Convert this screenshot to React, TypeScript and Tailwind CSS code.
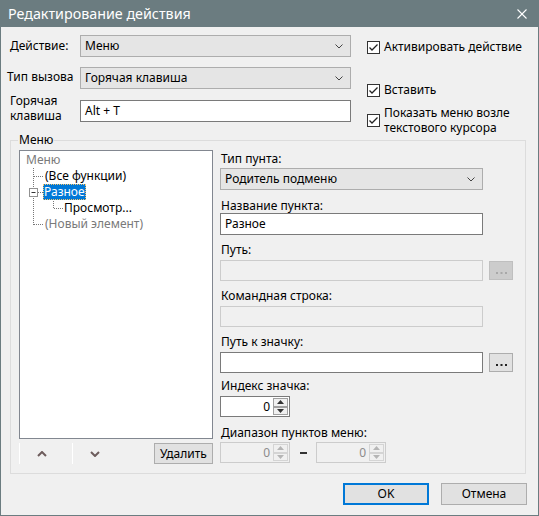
import React from "react";

const Chevron = () => (
  <svg width="8" height="5" viewBox="0 0 8 5" className="shrink-0">
    <polyline points="0.5,0.5 4,4 7.5,0.5" fill="none" stroke="#444" strokeWidth="1" />
  </svg>
);

const Combo = ({ text, w }: { text: string; w: string }) => (
  <div className={`${w} h-[22px] border border-[#adadad] bg-[#e5e5e5] flex items-center justify-between pl-[4px] pr-[7px]`}>
    <span>{text}</span>
    <Chevron />
  </div>
);

const Check = () => (
  <div className="w-[13px] h-[13px] border border-[#333] bg-white shrink-0 flex items-center justify-center">
    <svg width="11" height="11" viewBox="0 0 11 11">
      <polyline points="1.5,5.5 4,8 9.5,2.5" fill="none" stroke="#222" strokeWidth="1.3" />
    </svg>
  </div>
);

const SpinArrows = ({ disabled }: { disabled?: boolean }) => {
  const c = disabled ? "#b5b5b5" : "#333";
  const b = disabled ? "border-[#d4d4d4]" : "border-[#a0a0a0]";
  return (
    <div className="flex flex-col h-full w-[16px] shrink-0 py-[1px] pr-[1px]">
      <div className={`flex-1 border ${b} bg-[#f0f0f0] flex items-center justify-center`}>
        <svg width="7" height="4" viewBox="0 0 7 4"><polygon points="0,4 3.5,0 7,4" fill={c} /></svg>
      </div>
      <div className={`flex-1 border ${b} bg-[#f0f0f0] flex items-center justify-center`}>
        <svg width="7" height="4" viewBox="0 0 7 4"><polygon points="0,0 3.5,4 7,0" fill={c} /></svg>
      </div>
    </div>
  );
};

const Spin = ({ disabled }: { disabled?: boolean }) => (
  <div
    className={`w-[70px] h-[21px] border flex items-center ${
      disabled ? "border-[#cccccc] bg-[#f0f0f0] text-[#8c8c8c]" : "border-[#7a7a7a] bg-white"
    }`}
  >
    <div className="flex-1 text-right pr-[3px]">0</div>
    <SpinArrows disabled={disabled} />
  </div>
);

const DotsBtn = ({ disabled }: { disabled?: boolean }) => (
  <div
    className={`ml-[6px] w-[24px] h-[19px] border flex items-end justify-center pb-[5px] ${
      disabled ? "border-[#bfbfbf] bg-[#cccccc]" : "border-[#adadad] bg-[#e1e1e1]"
    }`}
  >
    <svg width="11" height="2" viewBox="0 0 11 2">
      {[0, 4.5, 9].map((x) => (
        <rect key={x} x={x} y="0" width="2" height="2" fill={disabled ? "#a8a8a8" : "#222"} />
      ))}
    </svg>
  </div>
);

const Label = ({ children, mt }: { children: React.ReactNode; mt: string }) => (
  <div className={`${mt} h-[15px] leading-[15px] pl-[1px]`}>{children}</div>
);

export default function App() {
  return (
    <div className="w-[539px] h-[516px] bg-[#f0f0f0] border-x border-b border-[#6b7c80] flex flex-col text-[12px] text-black font-['Noto_Sans',sans-serif] overflow-hidden">
      {/* Title bar */}
      <div className="h-[27px] bg-[#6b7c80] flex items-center justify-between pl-[7px] pr-[11px] text-white shrink-0">
        <span className="text-[14.3px]">Редактирование действия</span>
        <svg width="10" height="10" viewBox="0 0 10 10">
          <line x1="0.5" y1="0.5" x2="9.5" y2="9.5" stroke="white" strokeWidth="1.1" />
          <line x1="9.5" y1="0.5" x2="0.5" y2="9.5" stroke="white" strokeWidth="1.1" />
        </svg>
      </div>

      {/* Top section */}
      <div className="h-[113px] shrink-0 flex pt-[8px] pl-[9px]">
        <div className="flex flex-col gap-[10px]">
          <div className="flex items-center">
            <div className="w-[70px]">Действие:</div>
            <Combo text="Меню" w="w-[271px]" />
          </div>
          <div className="flex items-center">
            <div className="w-[70px] ml-[-3px] mr-[3px] mt-[-3px]">Тип вызова</div>
            <Combo text="Горячая клавиша" w="w-[271px]" />
          </div>
          <div className="flex items-center">
            <div className="w-[70px] mt-[-6px] flex flex-col">
              <span className="leading-[15px]">Горячая</span>
              <span className="leading-[15px]">клавиша</span>
            </div>
            <div className="w-[271px] h-[22px] border border-[#7a7a7a] bg-white flex items-center pl-[4px]">Alt + T</div>
          </div>
        </div>
        <div className="ml-[16px] flex flex-col">
          <div className="mt-[5px] h-[14px] flex items-center gap-[4px]">
            <Check />
            <span className="leading-[14px]">Активировать действие</span>
          </div>
          <div className="mt-[29px] h-[14px] flex items-center gap-[4px]">
            <Check />
            <span className="leading-[14px]">Вставить</span>
          </div>
          <div className="mt-[8px] flex items-center gap-[4px]">
            <Check />
            <div className="flex flex-col">
              <span className="leading-[15px]">Показать меню возле</span>
              <span className="leading-[15px]">текстового курсора</span>
            </div>
          </div>
        </div>
      </div>

      {/* Group box */}
      <div className="relative ml-[9px] w-[516px] h-[334px] shrink-0 border border-[#dcdcdc] flex pl-[8px] pt-[9px]">
        <span className="absolute top-[-9px] left-[7px] bg-[#f0f0f0] px-[1px] leading-[16px]">Меню</span>

        {/* Left: tree */}
        <div className="flex flex-col w-[194px]">
          <div className="relative w-[194px] h-[289px] border border-[#828790] bg-white pt-[1px]">
            <svg className="absolute left-0 top-0" width="60" height="90" viewBox="0 0 60 90">
              <line x1="13.5" y1="17" x2="13.5" y2="74" stroke="#777" strokeDasharray="1 1" />
              <line x1="14" y1="25.5" x2="24" y2="25.5" stroke="#777" strokeDasharray="1 1" />
              <line x1="18" y1="41.5" x2="23" y2="41.5" stroke="#777" strokeDasharray="1 1" />
              <line x1="14" y1="73.5" x2="24" y2="73.5" stroke="#777" strokeDasharray="1 1" />
              <line x1="33.5" y1="50" x2="33.5" y2="58" stroke="#777" strokeDasharray="1 1" />
              <line x1="34" y1="57.5" x2="43" y2="57.5" stroke="#777" strokeDasharray="1 1" />
              <rect x="9.5" y="37.5" width="8" height="8" fill="white" stroke="#919191" />
              <line x1="11.5" y1="41.5" x2="15.5" y2="41.5" stroke="#333" />
            </svg>
            <div className="h-[16px] leading-[16px] pl-[6px] text-[#7a7a7a]">Меню</div>
            <div className="h-[16px] leading-[16px] pl-[25px]">(Все функции)</div>
            <div className="h-[16px] leading-[16px] pl-[23px] flex">
              <span className="relative z-10 bg-[#0078d7] text-white px-[1px] outline outline-1 outline-dotted outline-[#f5c56e] -outline-offset-1">Разное</span>
            </div>
            <div className="h-[16px] leading-[16px] pl-[44px]">Просмотр...</div>
            <div className="h-[16px] leading-[16px] pl-[25px] text-[#7a7a7a]">(Новый элемент)</div>
          </div>
          <div className="mt-[4px] h-[21px] flex items-stretch">
            <div className="w-[53px] pr-[8px] border-l border-white flex items-center justify-center">
              <svg width="10" height="6" viewBox="0 0 10 6">
                <polyline points="1,5 5,1 9,5" fill="none" stroke="#6d5c5c" strokeWidth="2" />
              </svg>
            </div>
            <div className="w-[52px] pr-[8px] border-l border-white flex items-center justify-center">
              <svg width="10" height="6" viewBox="0 0 10 6">
                <polyline points="1,1 5,5 9,1" fill="none" stroke="#6d5c5c" strokeWidth="2" />
              </svg>
            </div>
            <div className="flex-1" />
            <div className="w-[59px] border border-[#adadad] bg-[#e1e1e1] flex items-center justify-center">Удалить</div>
          </div>
        </div>

        {/* Right column */}
        <div className="ml-[7px] flex flex-col">
          <Label mt="mt-[1px]">Тип пунта:</Label>
          <div className="mt-[2px]">
            <Combo text="Родитель подменю" w="w-[263px]" />
          </div>
          <Label mt="mt-[8px]">Название пункта:</Label>
          <div className="w-[263px] h-[22px] border border-[#7a7a7a] bg-white flex items-center pl-[4px]">Разное</div>
          <Label mt="mt-[7px]">Путь:</Label>
          <div className="mt-[3px] flex items-center">
            <div className="w-[263px] h-[21px] border border-[#cccccc] bg-[#f0f0f0]" />
            <DotsBtn disabled />
          </div>
          <Label mt="mt-[7px]">Командная строка:</Label>
          <div className="mt-[3px] w-[263px] h-[21px] border border-[#cccccc] bg-[#f0f0f0]" />
          <Label mt="mt-[7px]">Путь к значку:</Label>
          <div className="mt-[3px] flex items-center">
            <div className="w-[263px] h-[21px] border border-[#7a7a7a] bg-white" />
            <DotsBtn />
          </div>
          <Label mt="mt-[5px]">Индекс значка:</Label>
          <div className="mt-[3px]">
            <Spin />
          </div>
          <Label mt="mt-[8px]">Диапазон пунктов меню:</Label>
          <div className="mt-[2px] flex items-center">
            <Spin disabled />
            <div className="w-[26px] flex justify-center">
              <div className="w-[7px] h-[2px] bg-[#333]" />
            </div>
            <Spin disabled />
          </div>
        </div>
      </div>

      {/* Bottom buttons */}
      <div className="mt-[9px] flex justify-end gap-[12px] pr-[11px]">
        <div className="w-[86px] h-[22px] border-2 border-[#0078d7] bg-[#e1e1e1] flex items-center justify-center">OK</div>
        <div className="w-[86px] h-[22px] border border-[#adadad] bg-[#e1e1e1] flex items-center justify-center">Отмена</div>
      </div>
    </div>
  );
}
